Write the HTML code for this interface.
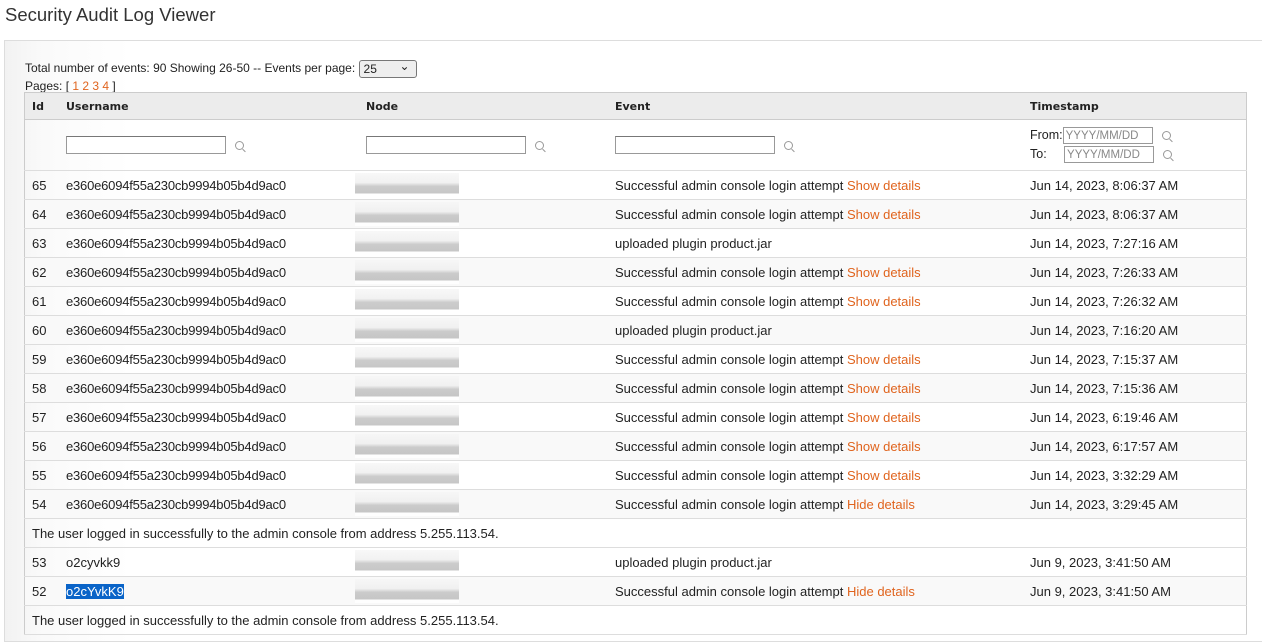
<!DOCTYPE html>
<html><head><style>
body{margin:0;background:#fff;font-family:"Liberation Sans",Arial,sans-serif;width:1262px;height:633px;overflow:hidden;position:relative}
h1{position:absolute;left:5px;top:4px;margin:0;font-weight:normal;font-size:18.5px;color:#333}
.panel{position:absolute;left:4px;top:40px;width:1262px;height:600px;border:1px solid #ddd;background:linear-gradient(90deg,#f2f2f2,#fafafa 3%,#fff 10%)}
.info{position:absolute;left:25px;top:60px;font-size:12px;color:#222;line-height:16px}
.sel{display:inline-block;width:58px;height:18px;border:1px solid #777;border-radius:3px;background:#eee;vertical-align:middle;font-size:12px;line-height:16px;padding-left:4px;box-sizing:border-box;position:relative}
.sel:after{content:"⌄";position:absolute;right:6px;top:-3px;font-size:12px}
.o{color:#e0641e}
table{position:absolute;left:24px;top:92px;width:1223px;border-collapse:collapse;font-size:13px;color:#222;border:1px solid #ccc}
th{background:#ececec;font-family:"DejaVu Sans",Verdana,sans-serif;font-size:11px;text-align:left;height:26px;padding:0;border-bottom:1px solid #ccc;color:#222}
td{height:28px;padding:0;border-bottom:1px solid #ddd;white-space:nowrap}
tr.g td{background:#f9f9f9}
.f td{height:50px}
.inp{display:inline-block;width:158px;height:16px;border:1px solid #999;border-top-color:#777;background:#fff;vertical-align:middle}
.mag{display:inline-block;width:7px;height:7px;border:1px solid #999;border-radius:50%;margin-left:9px;position:relative;vertical-align:middle}
.mag:after{content:"";position:absolute;width:4px;height:1px;background:#999;transform:rotate(45deg);left:6px;top:8px}
.d{display:inline-block;width:90px;height:17px;border:1px solid #999;color:#888;font-size:11.5px;line-height:16px;padding-left:2px;box-sizing:border-box;background:#fff;vertical-align:middle}
.blur{display:inline-block;width:104px;height:24px;vertical-align:middle;margin-left:-11px;background:linear-gradient(180deg,#f6f6f6 0,#eee 40%,#c0c0c0 55%,#b8b8b8 85%,#fff 86%);opacity:.8}
td.id{padding-left:7px;width:34px}
.u{letter-spacing:-0.2px}
</style></head><body>
<h1>Security Audit Log Viewer</h1>
<div class="panel"></div>
<div class="info">Total number of events: 90 Showing 26-50 -- Events per page: <span class="sel">25</span><br>Pages: [ <span class="o">1 2 3 4</span> ]</div>
<table>
<tr><th style="padding-left:7px;width:34px">Id</th><th style="width:300px">Username</th><th style="width:249px">Node</th><th style="width:415px">Event</th><th>Timestamp</th></tr>
<tr class="f"><td></td><td><span class="inp"></span><span class="mag"></span></td><td><span class="inp"></span><span class="mag"></span></td><td><span class="inp"></span><span class="mag"></span></td><td style="font-size:12.5px;line-height:19px">From:<span class="d">YYYY/MM/DD</span><span class="mag"></span><br>To:&nbsp;&nbsp;&nbsp;&nbsp;&nbsp;<span class="d">YYYY/MM/DD</span><span class="mag"></span></td></tr>
<tr><td class="id">65</td><td class="u">e360e6094f55a230cb9994b05b4d9ac0</td><td><span class="blur"></span></td><td>Successful admin console login attempt <span class="o">Show details</span></td><td>Jun 14, 2023, 8:06:37 AM</td></tr>
<tr class="g"><td class="id">64</td><td class="u">e360e6094f55a230cb9994b05b4d9ac0</td><td><span class="blur"></span></td><td>Successful admin console login attempt <span class="o">Show details</span></td><td>Jun 14, 2023, 8:06:37 AM</td></tr>
<tr><td class="id">63</td><td class="u">e360e6094f55a230cb9994b05b4d9ac0</td><td><span class="blur"></span></td><td>uploaded plugin product.jar</td><td>Jun 14, 2023, 7:27:16 AM</td></tr>
<tr class="g"><td class="id">62</td><td class="u">e360e6094f55a230cb9994b05b4d9ac0</td><td><span class="blur"></span></td><td>Successful admin console login attempt <span class="o">Show details</span></td><td>Jun 14, 2023, 7:26:33 AM</td></tr>
<tr><td class="id">61</td><td class="u">e360e6094f55a230cb9994b05b4d9ac0</td><td><span class="blur"></span></td><td>Successful admin console login attempt <span class="o">Show details</span></td><td>Jun 14, 2023, 7:26:32 AM</td></tr>
<tr class="g"><td class="id">60</td><td class="u">e360e6094f55a230cb9994b05b4d9ac0</td><td><span class="blur"></span></td><td>uploaded plugin product.jar</td><td>Jun 14, 2023, 7:16:20 AM</td></tr>
<tr><td class="id">59</td><td class="u">e360e6094f55a230cb9994b05b4d9ac0</td><td><span class="blur"></span></td><td>Successful admin console login attempt <span class="o">Show details</span></td><td>Jun 14, 2023, 7:15:37 AM</td></tr>
<tr class="g"><td class="id">58</td><td class="u">e360e6094f55a230cb9994b05b4d9ac0</td><td><span class="blur"></span></td><td>Successful admin console login attempt <span class="o">Show details</span></td><td>Jun 14, 2023, 7:15:36 AM</td></tr>
<tr><td class="id">57</td><td class="u">e360e6094f55a230cb9994b05b4d9ac0</td><td><span class="blur"></span></td><td>Successful admin console login attempt <span class="o">Show details</span></td><td>Jun 14, 2023, 6:19:46 AM</td></tr>
<tr class="g"><td class="id">56</td><td class="u">e360e6094f55a230cb9994b05b4d9ac0</td><td><span class="blur"></span></td><td>Successful admin console login attempt <span class="o">Show details</span></td><td>Jun 14, 2023, 6:17:57 AM</td></tr>
<tr><td class="id">55</td><td class="u">e360e6094f55a230cb9994b05b4d9ac0</td><td><span class="blur"></span></td><td>Successful admin console login attempt <span class="o">Show details</span></td><td>Jun 14, 2023, 3:32:29 AM</td></tr>
<tr class="g"><td class="id">54</td><td class="u">e360e6094f55a230cb9994b05b4d9ac0</td><td><span class="blur"></span></td><td>Successful admin console login attempt <span class="o">Hide details</span></td><td>Jun 14, 2023, 3:29:45 AM</td></tr>
<tr><td colspan="5" style="padding-left:7px">The user logged in successfully to the admin console from address 5.255.113.54.</td></tr>
<tr><td class="id">53</td><td>o2cyvkk9</td><td><span class="blur"></span></td><td>uploaded plugin product.jar</td><td>Jun 9, 2023, 3:41:50 AM</td></tr>
<tr class="g"><td class="id">52</td><td><span style="background:#0a64c8;color:#fff">o2cYvkK9</span></td><td><span class="blur"></span></td><td>Successful admin console login attempt <span class="o">Hide details</span></td><td>Jun 9, 2023, 3:41:50 AM</td></tr>
<tr><td colspan="5" style="padding-left:7px">The user logged in successfully to the admin console from address 5.255.113.54.</td></tr>
</table>
</body></html>
